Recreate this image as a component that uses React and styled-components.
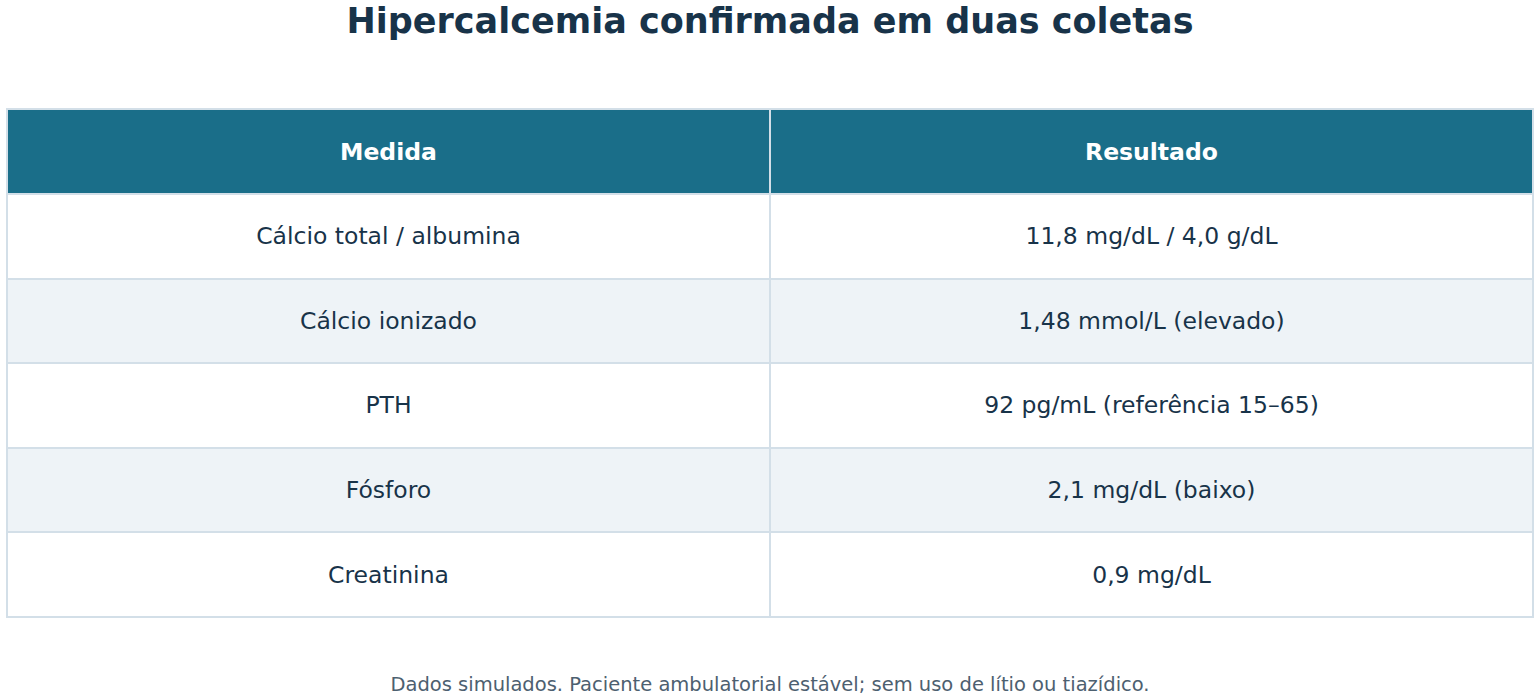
import styled, { createGlobalStyle } from "styled-components";

const Global = createGlobalStyle`
  body {
    margin: 0;
    background: #ffffff;
    font-family: "DejaVu Sans", sans-serif;
  }
`;

const Page = styled.div`
  width: 1540px;
  height: 700px;
  padding: 0 6px;
  box-sizing: border-box;
  display: flex;
  flex-direction: column;
  align-items: stretch;
  overflow: hidden;
`;

const Title = styled.h1`
  margin: 0;
  height: 108px;
  box-sizing: border-box;
  padding-top: 1px;
  text-align: center;
  font-size: 35px;
  font-weight: bold;
  line-height: 40px;
  color: #183349;
`;

const Table = styled.table`
  width: 100%;
  border-collapse: collapse;
  table-layout: fixed;
  border: 2px solid #d3dfe8;
`;

const HeadCell = styled.th`
  height: 83px;
  padding: 0;
  background: #1a6e89;
  color: #ffffff;
  font-size: 23.5px;
  font-weight: bold;
  text-align: center;
  border: 2px solid #d3dfe8;
`;

const Row = styled.tr`
  background: ${(p) => (p.$striped ? "#eef3f7" : "#ffffff")};
`;

const Cell = styled.td`
  height: 82.6px;
  padding: 0;
  font-size: 23.5px;
  color: #183349;
  text-align: center;
  border: 2px solid #d3dfe8;
`;

const Footer = styled.p`
  margin: 0;
  padding-top: 55px;
  text-align: center;
  font-size: 19.5px;
  color: #4d6070;
`;

const rows = [
  ["Cálcio total / albumina", "11,8 mg/dL / 4,0 g/dL"],
  ["Cálcio ionizado", "1,48 mmol/L (elevado)"],
  ["PTH", "92 pg/mL (referência 15–65)"],
  ["Fósforo", "2,1 mg/dL (baixo)"],
  ["Creatinina", "0,9 mg/dL"],
];

const App = () => {
  return (
    <Page>
      <Global />
      <Title>Hipercalcemia confirmada em duas coletas</Title>
      <Table>
        <thead>
          <tr>
            <HeadCell>Medida</HeadCell>
            <HeadCell>Resultado</HeadCell>
          </tr>
        </thead>
        <tbody>
          {rows.map(([label, value], i) => (
            <Row key={label} $striped={i % 2 === 1}>
              <Cell>{label}</Cell>
              <Cell>{value}</Cell>
            </Row>
          ))}
        </tbody>
      </Table>
      <Footer>
        Dados simulados. Paciente ambulatorial estável; sem uso de lítio ou
        tiazídico.
      </Footer>
    </Page>
  );
};

export default App;
